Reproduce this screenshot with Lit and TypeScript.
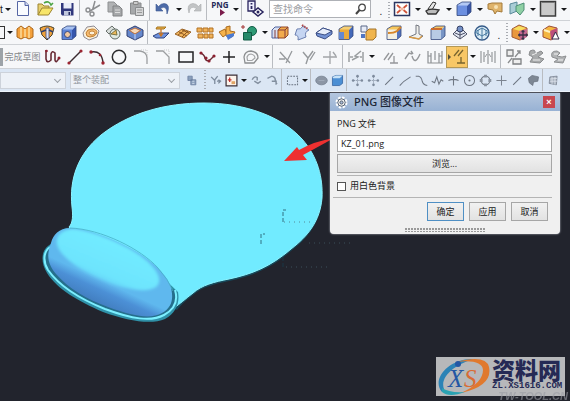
import { LitElement, html, svg, css, nothing, type SVGTemplateResult } from "lit";
import { customElement, property } from "lit/decorators.js";

type Glyph = SVGTemplateResult;

// A shaded isometric cube shared by the solid-modelling icons.
const cube = (top: string, left: string, right: string): Glyph => svg`
  <path d="M2 5L7 2H16L12 6H2z" fill=${top} />
  <path d="M2 5.500H12V15.500H2z" fill=${left} />
  <path d="M12 6L16 2V12L12 15.500z" fill=${right} />
  <path d="M2 5L7 2H16V12L12 15.500H2z" fill="none" stroke="#33477c" stroke-width=".8" />`;

const trim = svg`<path d="M3 4L13 15M9 15L15 3M2 11H8" stroke="#96999c" fill="none" stroke-width="1.3" />`;

const glyphs: Record<string, Glyph> = {
  file: svg`<path d="M3.500 1.500H11L14.500 5V15.500H3.500z" fill="#fafcff" stroke="#5666a4" /><path d="M11 1.500V5.500H14.500" fill="#cfd9f2" stroke="#5666a4" />`,
  open: svg`<path d="M2 15V4H6L8 6H13V8" fill="#e8d070" stroke="#9c8430" /><path d="M2 15L6 8H17L12.500 15z" fill="#f7e56a" stroke="#9c8430" /><path d="M8 3Q13 0 15 5L17 3" fill="none" stroke="#4da545" stroke-width="1.600" />`,
  save: svg`<path d="M3 3H15.500V15.500H4L3 14z" fill="#30377c" /><path d="M5.500 3H13.500V8.500H5.500z" fill="#e9edf8" /><path d="M6 11H13V15.500H6z" fill="#bfc6dc" /><path d="M10.500 12H12V15H10.500z" fill="#242b5e" />`,
  cut: svg`<path d="M11 1L8.500 10M16 5L6 11" stroke="#8c8e90" stroke-width="1.500" /><circle cx="4" cy="10" r="2" fill="none" stroke="#8c8e90" stroke-width="1.400" /><circle cx="8" cy="14" r="2" fill="none" stroke="#8c8e90" stroke-width="1.400" />`,
  copy: svg`<path d="M2 2H8L11 5V12H2z" fill="#b0b2b4" stroke="#8e9092" /><path d="M7 6H13L16 9V16H7z" fill="#a6a8aa" stroke="#808284" /><path d="M9 10H14M9 12.500H14" stroke="#ddd" />`,
  paste: svg`<path d="M2.500 3H13V14H2.500z" fill="#a6a8aa" stroke="#8a8c8e" /><path d="M5.500 1.500H10V4.500H5.500z" fill="#ccc" stroke="#888" /><path d="M7.500 7.500H15.500V15.500H7.500z" fill="#d4d5d6" stroke="#8a8c8e" /><path d="M9 10H14M9 12.500H14" stroke="#999" />`,
  undo: svg`<path d="M2 4V11H9L6.500 8.500Q13 4.500 13 14Q17 4 10 3.500Q7 3.500 4.500 6.500z" fill="#4d6ba8" stroke="#3c5790" stroke-width=".6" />`,
  redo: svg`<path d="M16 4V11H9L11.500 8.500Q5 4.500 4 13Q1 4 8 3.500Q11 3.500 13.500 6.500z" fill="#c2c4c6" stroke="#a9abad" stroke-width=".6" />`,
  play: svg`<path d="M7 9L12 12.500L7 16z" fill="#7b1c4c" />`,
  info: svg`<path d="M2 1H9V11H2z" fill="#eef" stroke="#29245e" stroke-width="1.300" /><path d="M5.500 3V4.500M5.500 6V9" stroke="#29245e" stroke-width="1.800" /><path d="M7 12L12 8L17 12L12 16z" fill="#fff" stroke="#29245e" stroke-width="1.500" /><circle cx="12" cy="12" r="1.500" fill="#29245e" />`,
  fit: svg`<path d="M1.500 2.500H16.500V15.500H1.500z" fill="#fff" stroke="#2a3560" stroke-width="1.500" /><path d="M4 5L7.500 8M14 5L10.500 8M4 13L7.500 10M14 13L10.500 10" stroke="#d0543a" stroke-width="1.800" /><path d="M7.500 7.500H10.500V10.500H7.500z" fill="#f1b49c" />`,
  clip: svg`<path d="M4 9L9 2L12 3L8 10z" fill="#e6e6e6" stroke="#333" /><path d="M2 11Q5 8 15 10L12 14L4 14z" fill="#bcbcbc" stroke="#333" stroke-width="1.300" />`,
  cube: cube("#b3c9f5", "#6c8fe0", "#3755a8"),
  view: svg`<path d="M2 4L6 3H16V12L11 11L9 14L7 10L2 9z" fill="#dfb36a" stroke="#a47a3a" /><circle cx="10" cy="7" r="2" fill="#f6e2b4" />`,
  shade: svg`<path d="M2 4L9 2V11L2 14z" fill="#a9cdd6" stroke="#5a8a9a" /><path d="M8 6L16 3V10L12 15L8 11z" fill="#8fd0a4" stroke="#4e8f77" />`,
  swatch: svg`<path d="M1.500 1.500H16.500V16H1.500z" fill="#c9c9c9" stroke="#3c3c3c" stroke-width="1.500" /><path d="M3 2.500H15.500" stroke="#777" />`,
  sheet: svg`<path d="M1 5L5 2L9 5L13 2L17 5V13L13 15L9 13L5 15L1 13z" fill="#f3a13c" stroke="#ac671b" /><path d="M5 3V14M9 5V13M13 3V14" stroke="#fbdc9c" stroke-width="1.500" />`,
  revolve: svg`<path d="M2 4Q9 0 16 4L14 11L9 16L4 11z" fill="#efa23c" stroke="#4a4430" /><path d="M8 4H11V15L8 14z" fill="#dfe5f7" stroke="#3c4a7c" stroke-width=".8" /><path d="M3 8L8 6M11 6L15 8" stroke="#33406c" stroke-width="1.500" />`,
  hole: svg`${cube("#a9c3f2", "#5d84d8", "#3656ac")}<circle cx="7.500" cy="10.500" r="3" fill="#f0c8a0" stroke="#37477c" />`,
  unite: svg`<path d="M1 9L5 3L12 2L17 7L15 13L7 16L2 13z" fill="#fbf1dd" stroke="#8d8a94" /><path d="M4 9Q5 5 10 5Q15 5 15 9Q13 13 8 13Q4 13 4 9z" fill="#f6bc72" stroke="#c27f31" /><ellipse cx="10" cy="9" rx="3" ry="2" fill="#fdf0da" stroke="#c27f31" />`,
  gear3: svg`<path d="M2 7L8 2L11 5L5 10z" fill="#d9dfdc" stroke="#69706c" /><ellipse cx="11" cy="10" rx="5" ry="5" fill="#dfe9e2" stroke="#5f6a64" /><path d="M7 10L12 6L13 11z" fill="#ebb85b" stroke="#7c7440" />`,
  shell: svg`<path d="M1 6L9 2L17 6V12L9 16L1 12z" fill="#6688cc" stroke="#303e70" /><path d="M3.500 6.500L9 4L14.500 6.500L9 10z" fill="#f8d9b8" stroke="#be6f3a" /><path d="M9 10V15.500" stroke="#c4d5fa" />`,
  offset: svg`<path d="M1 12L7 9H17L12 14H4z" fill="#6f92dd" stroke="#30457e" /><path d="M5 3H14L12 5H4z" fill="#f3b64c" stroke="#a3731e" /><path d="M9 5V11M7 9L9 12L11 9" fill="none" stroke="#cb7723" stroke-width="1.300" />`,
  pattern: svg`<path d="M1 10L8 5L17 8L10 14z" fill="#f1b45c" stroke="#9b6427" /><path d="M5 8L13 12M8 6L15 9M4 11L11 6M8 13L14 7" stroke="#8f5a22" />`,
  waves: svg`<path d="M1 4H6V8H1zM7 4H12V8H7zM13 4H17V8H13zM2 10H7V14H2zM8 10H12V14H8zM13 10H17V14H13z" fill="#f1b35a" stroke="#b37224" />`,
  move: svg`<path d="M1 8L7 5L9 10L5 13z" fill="#f5b24b" stroke="#a86a1f" /><path d="M8 3L12 2V7L17 8L14 13L8 12z" fill="#f5b24b" stroke="#a86a1f" /><path d="M8 11L16 9V12L10 16z" fill="#4d7bd0" />`,
  sketch: svg`<path d="M1 3H5M3 1V5" stroke="#a03030" /><circle cx="12" cy="7" r="4.500" fill="#2e9a75" stroke="#125c46" /><path d="M3.500 8.500H11.500V16H3.500z" fill="#26896a" stroke="#125c46" />`,
  split: svg`<path d="M1 6L4 3H10V11L8 14H1z" fill="#d8e0f2" stroke="#50629c" /><path d="M7 6L10 3H17V11L14 14H7z" fill="#f2ab4d" stroke="#924724" /><path d="M7 6H14V14M14 6L17 3M4 6V14" fill="none" stroke="#843c3c" />`,
  drape: svg`<path d="M4 5Q8 6 10 2L16 6Q11 8 13 13L5 16Q6 11 2 11z" fill="#c5d5f2" stroke="#6b7fb0" /><path d="M9 1L15 5" stroke="#b14a4a" stroke-width="2" stroke-dasharray="1.500 1" />`,
  prism: svg`<path d="M1 9L8 4L17 7V10L10 15L2 12z" fill="#7392d4" stroke="#3c4f86" /><path d="M1 9L8 4L17 7L10 11z" fill="#e6edfa" stroke="#3c4f86" />`,
  half: svg`${cube("#f6cf74", "#e9ab3c", "#4469ba")}<path d="M2 8H7V15H2z" fill="#6288d2" />`,
  boxes: svg`<path d="M2 2H8V8H2z" fill="#e7ecf7" stroke="#596688" /><path d="M7 8L10 5H17V13L14 16H7z" fill="#f0b54e" stroke="#a3742b" /><path d="M2 10H6V14H2z" fill="#5076c2" />`,
  blend: svg`${cube("#f6c75c", "#f4f0e2", "#5474bf")}<path d="M3 9Q9 9 12 7L16 3" fill="none" stroke="#d8862b" stroke-width="2" />`,
  draft: svg`<path d="M9 1L12 2V10L16 12L12 15L2 13L9 10z" fill="#f1f1ed" stroke="#737780" /><path d="M2 13L12 15L15 12" fill="none" stroke="#d89a45" stroke-width="1.400" />`,
  block: svg`${cube("#f9c867", "#b8cbe4", "#7895c5")}<path d="M2 5H13" stroke="#cc6d2c" stroke-width="2" />`,
  cone: svg`<path d="M2 10L9 3L16 10L9 15z" fill="#e3e8f3" stroke="#4a4f65" /><circle cx="9" cy="5" r="3" fill="#7591c7" stroke="#374266" /><path d="M9 8V15M4 9L9 11L14 9" fill="none" stroke="#4a4f65" />`,
  mesh: svg`<circle cx="9" cy="9" r="7" fill="#dcecf5" stroke="#355a88" stroke-width="1.300" /><path d="M2 8L9 4L16 8L9 12zM9 4V15M5 6L5 12M13 6V12" fill="none" stroke="#4478a0" />`,
  dims: svg`<path d="M1 5L8 1L16 4V12L9 16L1 13z" fill="#e9973c" stroke="#a05a37" /><path d="M2 5L8 2L15 4L9 7z" fill="#f7df60" /><path d="M8 7L16 5V13L9 16z" fill="#c76993" /><path d="M7 11H17M12 6V16M8.500 9.500V12.500M15.500 9.500V12.500M10.500 7.500H13.500M10.500 14.500H13.500" stroke="#3b3147" stroke-width="1.300" />`,
  warn: svg`<path d="M1 6L7 2L15 4V12L9 16L1 13z" fill="#f4b640" stroke="#9c4c36" /><path d="M8 7L15 4V12L9 16z" fill="#bd4e7b" /><path d="M10 15L13.500 8L17 15z" fill="#fff" stroke="#342b48" /><path d="M2 6L8 8" stroke="#fff3bf" stroke-width="2" />`,
  profile: svg`<path d="M2 2V11Q3 16 7 12V6Q8 2 11 5V12Q12 16 15 10" fill="none" stroke="#682b35" stroke-width="1.600" /><circle cx="2.500" cy="3" r="1.300" fill="#8c2130" /><circle cx="15" cy="10" r="1.500" fill="#8c2130" />`,
  line: svg`<path d="M3 15L15 3" stroke="#3a2a30" stroke-width="1.400" /><circle cx="3" cy="15" r="1.600" fill="#9c2532" /><circle cx="15" cy="3" r="1.600" fill="#9c2532" />`,
  arc: svg`<path d="M3 4Q14 2 15 15" fill="none" stroke="#3a2a30" stroke-width="1.400" /><circle cx="3" cy="4" r="1.700" fill="#9c2532" /><circle cx="15" cy="15" r="1.700" fill="#9c2532" /><circle cx="12" cy="7" r="1.300" fill="#9c2532" />`,
  circle: svg`<circle cx="9" cy="9" r="6.700" fill="none" stroke="#2c2c2e" stroke-width="1.500" />`,
  fillet: svg`<path d="M2 3H8Q15 4 15 10V16" fill="none" stroke="#9c9ea0" stroke-width="1.300" /><path d="M9 2H15V8" fill="none" stroke="#c6c7c9" stroke-dasharray="1 1" />`,
  chamfer: svg`<path d="M2 3H9L15 9V16" fill="none" stroke="#9c9ea0" stroke-width="1.300" /><path d="M10 2H15V7" fill="none" stroke="#c6c7c9" stroke-dasharray="1 1" />`,
  rect: svg`<path d="M3 4H17V14H3z" fill="none" stroke="#232325" stroke-width="1.500" />`,
  spline: svg`<path d="M2 5Q6 6 7 10T12 12L16 8" fill="none" stroke="#682b35" stroke-width="1.400" /><circle cx="3" cy="5" r="1.600" fill="#8c2130" /><circle cx="8" cy="10" r="1.600" fill="#8c2130" /><circle cx="11" cy="13" r="1.600" fill="#8c2130" /><circle cx="16" cy="8" r="1.600" fill="#8c2130" />`,
  plus: svg`<path d="M9 3V15M3 9H15" stroke="#232325" stroke-width="1.500" />`,
  offsetCurve: svg`<path d="M3 15L2 9Q3 3 9 3Q16 4 16 10L12 15z" fill="none" stroke="#8c8e90" stroke-width="1.300" /><path d="M5.500 12.500L5 9Q6 6 9 6Q13 7 13 10L10 12.500z" fill="none" stroke="#a2a4a6" stroke-width="1.200" />`,
  trim,
  extend: svg`<path d="M4 4L9 10L14 3M9 10L7 16M11 12L16 4" stroke="#96999c" fill="none" stroke-width="1.400" />`,
  corner: svg`<path d="M2 9H16M9 3V16M12 4L15 8" stroke="#a2a5a8" fill="none" stroke-width="1.300" />`,
  measure: svg`<path d="M2 4V14M16 4V14M3 9H6M13 9H15M5 12L11 9L8 8L14 3" fill="none" stroke="#9a9ea0" stroke-width="1.500" />`,
  parallel: svg`<path d="M2 12L7 5M6 12L11 5M8 15H16M12 8V15" stroke="#95979a" fill="none" stroke-width="1.300" />`,
  wave: svg`<path d="M1 11L5 5L8 6M7 3L9 6M8 8Q11 18 16 6" fill="none" stroke="#95979a" stroke-width="1.400" />`,
  columns: svg`<path d="M2 3V15H16V3M9 3V12M5 5V15M13 5V15M2 8H5M13 8H16" fill="none" stroke="#8e9194" stroke-width="1.200" />`,
  relation: svg`<path d="M0 6V12L3 9z" fill="#54503c" /><path d="M6 8L11 2M10 8L15 2M9 15H17M13 9V15" stroke="#77642f" fill="none" stroke-width="1.300" />`,
  mirror: svg`<path d="M2 3V15M5 4V14M13 4V14M16 3V15M9 2V16" stroke="#96999c" stroke-width="1.200" /><path d="M6 9L8 6M12 9L10 6" stroke="#96999c" />`,
  project: svg`<path d="M2 2H8V8H2zM8 11H16V16H8z" fill="#eee" stroke="#7e8082" stroke-width="1.300" /><path d="M3 15L7 10M10 9L15 3M12 3H15V6" fill="none" stroke="#8b8d8f" stroke-width="1.300" />`,
  convert: svg`<path d="M3 3Q9 0 8 6L14 3L16 5L11 9L17 11L13 15L3 14L6 9L2 7z" fill="#a9abac" stroke="#8a8c8e" /><path d="M5 7L10 5M6 12H13" stroke="#eee" />`,
  loop: svg`<path d="M3 9Q1 3 8 3L11 5L8 8L13 9L17 8L14 15L5 14L9 11z" fill="#b2b4b6" stroke="#8d8f91" /><path d="M5 6H9M9 12H14" stroke="#f2f2f2" />`,
  filter: svg`<path d="M4 3H10V9H4zM8 8H15V15H8z" fill="#8ba0bc" stroke="#64789a" /><path d="M10 10H13M10 13H13" stroke="#e3ecf8" />`,
  funnel: svg`<path d="M3 4L8 9M12 3L8 8V14M11 10H16M13 8L16 10L13 13" stroke="#7e8b9c" fill="none" stroke-width="1.800" />`,
  framed: svg`<path d="M1.500 1.500H16.500V16.500H1.500z" fill="#fdf4ec" stroke="#3c3038" stroke-width="1.700" /><path d="M4 8H9M6.500 5V11" stroke="#bf3030" stroke-width="1.800" /><path d="M9 10H14V14H9z" fill="#e0a464" />`,
  hookA: svg`<path d="M3 8Q6 2 10 5V9M6 10L11 13L15 10" fill="none" stroke="#838f9f" stroke-width="2" />`,
  hookB: svg`<path d="M2 6L8 3Q13 4 13 9L15 14M8 10H14V15" fill="none" stroke="#838f9f" stroke-width="2" />`,
  marquee: svg`<path d="M2 3H16V15H2z" fill="none" stroke="#67717f" stroke-width="1.400" stroke-dasharray="2.500 1.500" />`,
  blob: svg`<ellipse cx="9" cy="9" rx="8" ry="6" fill="#8c96a5" stroke="#6f7a8a" /><path d="M5 9H13" stroke="#a8b2c0" />`,
  solid: svg`<path d="M2 4L7 2H16V13L12 16H2z" fill="#4c8fd4" stroke="#2c5d9c" /><path d="M2 4L7 2H16L12 6H3z" fill="#c6e2f8" />`,
  nodes: svg`<path d="M4 9H14M9 4V14" stroke="#7d8a9c" stroke-dasharray="2 1" /><circle cx="3" cy="9" r="1.800" fill="#7d8a9c" /><circle cx="15" cy="9" r="1.800" fill="#7d8a9c" /><circle cx="9" cy="3" r="1.800" fill="#7d8a9c" /><circle cx="9" cy="15" r="1.800" fill="#7d8a9c" />`,
  slash: svg`<path d="M4 14L14 4M3 15L5 13" stroke="#707884" stroke-width="1.500" />`,
  stroke: svg`<path d="M1 16Q6 10 16 4" fill="none" stroke="#707884" stroke-width="1.500" />`,
  scurve: svg`<path d="M1 3H5Q9 4 10 10Q11 15 17 16" fill="none" stroke="#707884" stroke-width="1.500" />`,
  zig: svg`<path d="M1 10L5 12L8 4L11 14L14 8L17 10" fill="none" stroke="#6f7783" stroke-width="1.500" />`,
  cross: svg`<path d="M9 3V16M2 9Q9 6 16 9" fill="none" stroke="#6f7783" stroke-width="1.500" />`,
  target: svg`<circle cx="9" cy="9" r="7" fill="none" stroke="#6f7783" stroke-width="1.400" /><circle cx="9" cy="9" r="1.500" fill="#6f7783" />`,
  quad: svg`<circle cx="9" cy="9" r="6" fill="none" stroke="#6f7783" stroke-width="1.400" /><path d="M7 1H11V5H7zM7 13H11V17H7zM1 7H5V11H1zM13 7H17V11H13z" fill="#89929f" />`,
  thin: svg`<path d="M9 2V16M2 9H16" stroke="#7c8490" stroke-width="1.400" />`,
  face: svg`<path d="M2 6L7 2L16 4L15 10L9 11L8 16L3 12z" fill="#7d8794" stroke="#68717e" />`,
  grid: svg`<path d="M4 4L14 3L13 15L3 13z" fill="#a6afbc" stroke="#727b88" /><path d="M4 7L14 6M4 10L14 10M7 4V14M11 4V15" stroke="#e2e7ef" />`,
};

@customElement("tool-icon")
class ToolIcon extends LitElement {
  @property() name = "";

  static styles = css`
    :host { display: flex; flex: none; width: 22px; }
    :host([compact]) { width: 16px; }
    .btn { flex: 1; display: flex; align-items: center; justify-content: center; min-width: 0; height: 22px; margin: 0; padding: 0; border: 0; background: none; }
    .art { width: 18px; height: 18px; flex: none; overflow: visible; }
    :host([compact]) .art { width: 13px; height: 13px; }
    :host([active]) .btn { background: #f8c766; outline: 1px solid #b39857; outline-offset: -1px; }
  `;

  render() {
    return html`<button class="btn" type="button" aria-label=${this.name}>
      <svg class="art" viewBox="0 0 18 18" aria-hidden="true">${glyphs[this.name] ?? nothing}</svg>
    </button>`;
  }
}

// "|" separator, ":" drag handle, "v" drop-down arrow, "_" narrow gap, "*" marks the active tool.
const rowFile = "file open save | cut copy paste | undo v redo |";
const rowView = ": fit v clip v cube v view shade v swatch v";
const rowFeature =
  "v sheet revolve hole unite gear3 shell | offset pattern waves move sketch v split drape prism half boxes _ blend draft block cone mesh";
const rowFeatureEnd = ": dims v warn v";
const rowSketch =
  "profile line arc circle fillet chamfer rect spline plus offsetCurve v | trim extend corner | measure v _ parallel wave columns *relation v mirror | project convert loop";
const rowSelect =
  "filter _ : funnel framed v hookA hookB | marquee v | blob solid | nodes nodes slash stroke scurve zig cross target quad thin slash face | grid";

@customElement("app-root")
class AppRoot extends LitElement {
  static styles = css`
    :host { display: flex; flex-direction: column; min-height: 100vh; background: #22242d; font-family: "Liberation Sans", "Noto Sans CJK SC", sans-serif; font-size: 10px; color: #222; overflow: hidden; }
    .bar { display: flex; align-items: center; height: 24px; box-sizing: border-box; overflow: hidden; background: #f6f7f9; border-bottom: 1px solid #cfd2d6; }
    .bar.first { height: 21px; padding-bottom: 2px; }
    .bar.select { background: #dbe6f4; height: 23px; border-bottom-color: #eef4fb; }
    .sep, .handle, .caret, .gap { flex: none; }
    .sep { width: 4px; height: 24px; background: linear-gradient(90deg, transparent 1px, #b9bcc1 1px 2px, transparent 2px); }
    .handle { width: 4px; height: 20px; background: repeating-linear-gradient(#a9acb2 0 1px, transparent 1px 3px) 1px 0 / 2px 100% no-repeat; }
    .gap { width: 4px; }
    .caret { width: 9px; padding: 0; border: 0; background: none; display: flex; justify-content: center; }
    .caret::before { content: ""; border: 3px solid transparent; border-top-color: #17181a; border-bottom-width: 0; }
    .stub { width: 3px; flex: none; }
    .frag { width: 5px; height: 13px; flex: none; box-sizing: border-box; border: 1px solid #333; border-left: 0; }
    .dot { width: 12px; flex: none; text-align: center; line-height: 12px; padding-top: 6px; box-sizing: border-box; }
    .png { flex: none; width: 22px; height: 18px; padding: 0; border: 0; background: none; position: relative; display: flex; justify-content: center; align-items: flex-start; font: bold 8px/9px "Open Sans", sans-serif; color: #262b58; }
    .png svg { position: absolute; left: 4px; top: 0; width: 18px; height: 18px; }
    .search { display: flex; align-items: center; flex: none; width: 102px; height: 18px; box-sizing: border-box; margin: 0 4px 0 3px; padding: 0 3px; border: 1px solid #aeb1b6; background: #fff; }
    .search input { flex: 1; min-width: 0; border: 0; padding: 0; outline: 0; background: none; font: inherit; }
    .search input::placeholder { color: #9b9da2; }
    .search svg { width: 12px; height: 12px; }
    .finish { width: 39px; flex: none; padding: 0; border: 0; background: none; font: inherit; font-size: 9px; white-space: nowrap; color: #85878a; }
    .block { width: 3px; height: 18px; background: #9da3a8; flex: none; }
    .pick { position: relative; flex: none; width: 110px; margin-right: 3px; display: flex; }
    .pick.short { width: 66px; margin-right: 4px; }
    .pick select { appearance: none; width: 100%; height: 17px; padding: 0 16px 0 2px; border: 1px solid #cdd2da; border-radius: 0; background: #edf1f7; font: inherit; font-size: 9px; line-height: 15px; color: #92969c; opacity: 1; }
    .pick::after { content: ""; position: absolute; right: 6px; top: 5px; width: 4px; height: 4px; border: solid #9a9fa6; border-width: 0 1px 1px 0; transform: rotate(45deg); }
    .stage { position: relative; flex: 1; }
    .scene { display: block; width: 100%; }
    .dialog { position: absolute; top: 1px; right: 10px; width: 230px; box-sizing: border-box; background: #f0f0f0; border-radius: 0 0 4px 4px; box-shadow: 0 0 2px #c8ccd4; }
    .title { display: flex; align-items: center; height: 18px; padding: 0 5px; background: linear-gradient(#b4c6de, #98b2d4); }
    .title svg { width: 13px; height: 13px; }
    .title h1 { flex: 1; margin: 0 0 0 6px; font: 500 11px/18px "Noto Sans", "Noto Sans CJK SC", sans-serif; color: #1c2636; }
    .close { width: 12px; height: 12px; padding: 0; border: 0; background: #c8474f; color: #fff; font: bold 9px/12px "Liberation Sans", sans-serif; }
    .form { display: flex; flex-direction: column; padding: 6px 8px 2px 7px; font: 9px/14px "Open Sans", "Noto Sans CJK SC", sans-serif; color: #1a1a1a; }
    .name { height: 17px; margin: 4px 0 2px; padding: 0 3px; box-sizing: border-box; border: 1px solid #a7a7a7; background: #fff; font: inherit; color: inherit; }
    .push { height: 19px; box-sizing: border-box; padding: 0; border: 1px solid #a6a6a6; background: linear-gradient(#f1f1f1, #e2e2e2); font: inherit; line-height: 16px; color: inherit; }
    .check { display: flex; align-items: center; gap: 4px; height: 18px; margin-top: 2px; padding-top: 1px; border-top: 1px solid #b4b4b4; }
    .check input { appearance: none; width: 9px; height: 9px; box-sizing: border-box; margin: 0; border: 1px solid #555; background: #fff; }
    .actions { display: flex; justify-content: flex-end; gap: 5px; margin: 2px 0 0 -4px; padding: 4px 4px 0 0; border-top: 1px solid #b4b4b4; }
    .actions .push { width: 37px; }
    .actions .main { border-color: #4f8fc4; }
    .grip { width: 80px; height: 4px; margin: 7px auto 0; background: radial-gradient(circle at 1px 1px, #999 1px, transparent 1px) 0 0 / 3px 3px; }
    .mark { position: absolute; right: 5px; bottom: 5px; display: flex; width: 129px; height: 39px; background: #b7b8ba; color: #252a55; }
    .mark svg { width: 56px; height: 39px; flex: none; }
    .brand { display: flex; flex-direction: column; font: 900 23px/25px "Noto Sans CJK SC", sans-serif; white-space: nowrap; }
    .site { font: bold 9px/9px "Liberation Mono", monospace; }
    .under { position: absolute; right: 2px; bottom: 0; font: bold italic 11px/10px "Liberation Sans", sans-serif; color: #9a9ca4; opacity: .6; }
  `;

  private tools(spec: string, compact = false) {
    return spec.split(" ").map((t) => {
      if (t === "|") return html`<span class="sep"></span>`;
      if (t === ":") return html`<span class="handle"></span>`;
      if (t === "_") return html`<span class="gap"></span>`;
      if (t === "v") return html`<button class="caret" type="button" aria-label="more"></button>`;
      const active = t.startsWith("*");
      return html`<tool-icon name=${active ? t.slice(1) : t} ?compact=${compact} ?active=${active}></tool-icon>`;
    });
  }

  private scene() {
    return svg`
      <defs>
        <linearGradient id="side" gradientUnits="userSpaceOnUse" x1="105" y1="282" x2="94" y2="306">
          <stop offset="0" stop-color="#5fb8ee" /><stop offset=".35" stop-color="#4c90d6" /><stop offset="1" stop-color="#3f79ba" />
        </linearGradient>
        <linearGradient id="top" gradientUnits="userSpaceOnUse" x1="120" y1="245" x2="104" y2="283">
          <stop offset="0" stop-color="#71ebff" /><stop offset=".8" stop-color="#6de4fd" /><stop offset="1" stop-color="#66d2f7" />
        </linearGradient>
        <filter id="soft" x="-10%" y="-10%" width="120%" height="120%"><feGaussianBlur stdDeviation="1.500" /></filter>
      </defs>
      <path d="M69 227C73 223 73 215 72 207C69 179 78 154 101 135C129 113 165 103 204 103C246 103 282 117 302 139C318 157 323 178 322 198C320 221 308 236 291 249C270 267 252 274 229 279C214 282 202 285 193 293C184 300 181 303 177 308L112 275z" fill="#17495b" transform="translate(0 2)" />
      <path d="M69 227C73 223 73 215 72 207C69 179 78 154 101 135C129 113 165 103 204 103C246 103 282 117 302 139C318 157 323 178 322 198C320 221 308 236 291 249C270 267 252 274 229 279C214 282 202 285 193 293C184 300 181 303 174 308L112 275z" fill="#71ebff" stroke="#8cf4ff" />
      <path d="M51 244C41 249 40 262 47 273C57 289 78 301 103 312C128 321 151 325 165 319C176 313 180 303 178 292L150 265L70 240z" fill="#2f91a8" />
      <path d="M50 247C43 252 43 262 48 270C60 287 80 299 105 309C132 319 151 322 164 315C175 309 178 300 175 290" fill="#256f8c" stroke="#7cefff" stroke-width="2" />
      <path d="M70 228C59 228 53 235 51 243C46 256 48 264 56 274C68 288 86 299 108 307C135 317 151 319 162 313C173 307 174 297 170 284C163 270 147 257 130 248C108 236 86 229 70 228z" fill="url(#side)" />
      <path d="M71 229C57 231 53 241 60 251C70 265 90 275 112 284C133 291 149 292 156 287C165 279 154 263 130 249C108 237 85 229 71 229z" fill="url(#top)" filter="url(#soft)" />
      <path d="M70 228C101 229 141 249 158 268Q168 279 173 291" fill="none" stroke="#48aec8" stroke-width=".8" />
      <path d="M284 161L297 147L299 150Q315 141 334 138Q318 147 303 155L307 160z" fill="#ee3030" />
      <g fill="none" stroke="#173f50" opacity=".7">
        <path d="M283 222V210H286M261 244V234H265M283 267V257" stroke-dasharray="4 2" />
        <path d="M284 222H311M309 243H350M286 267H328" stroke-dasharray="1 4" stroke="#47606c" />
      </g>`;
  }

  render() {
    return html`
      <nav class="bar first" aria-label="标准">
        <span class="stub">t</span>${this.tools("v")}${this.tools(rowFile)}
        <button class="png" type="button">PNG<svg viewBox="0 0 18 18">${glyphs.play}</svg></button>
        ${this.tools("v | info")}
        <label class="search">
          <input type="search" placeholder="查找命令" aria-label="查找命令" />
          <svg viewBox="0 0 12 12"><circle cx="7" cy="4.500" r="3.300" fill="#fff" stroke="#444" stroke-width="1.300" /><path d="M4.500 7L1 11" stroke="#444" stroke-width="2" /></svg>
        </label>
        <span class="dot">.</span>${this.tools(rowView)}
      </nav>
      <nav class="bar" aria-label="特征">
        <span class="frag"></span>${this.tools(rowFeature)}<span class="dot">.</span>${this.tools(rowFeatureEnd)}
      </nav>
      <nav class="bar" aria-label="草图">
        <span class="block"></span><button class="finish" type="button">完成草图</button>${this.tools(rowSketch)}
      </nav>
      <nav class="bar select" aria-label="选择">
        <span class="pick short"><select aria-label="过滤器"><option></option></select></span>
        <span class="pick"><select aria-label="范围"><option>整个装配</option></select></span>
        ${this.tools(rowSelect, true)}
      </nav>
      <main class="stage">
        <svg class="scene" viewBox="0 92 570 309" role="img" aria-label="鼠标垫">${this.scene()}</svg>
        <section class="dialog" role="dialog" aria-labelledby="heading">
          <header class="title">
            <svg viewBox="0 0 14 14"><circle cx="7" cy="7" r="5" fill="none" stroke="#fff" stroke-width="3" stroke-dasharray="2.600 1.300" /><circle cx="7" cy="7" r="4" fill="#f6f6f6" stroke="#4c5664" /><circle cx="7" cy="7" r="1.700" fill="#a9bcd8" stroke="#4c5664" /></svg>
            <h1 id="heading">PNG 图像文件</h1>
            <button class="close" type="button" aria-label="关闭">×</button>
          </header>
          <div class="form">
            <label for="name">PNG 文件</label>
            <input class="name" id="name" type="text" value="KZ_01.png" />
            <button class="push" type="button">浏览...</button>
            <label class="check"><input type="checkbox" />用白色背景</label>
            <div class="actions">
              <button class="push main" type="button">确定</button>
              <button class="push" type="button">应用</button>
              <button class="push" type="button">取消</button>
            </div>
            <div class="grip"></div>
          </div>
        </section>
        <aside class="mark">
          <svg viewBox="0 0 56 39">
            <path d="M6 35C-5 23 12 1 38 2C22 6 3 19 8 32z" fill="#2c83b6" />
            <path d="M20 5Q50 -3 53 10Q57 29 25 36Q47 26 47 13Q46 2 20 5z" fill="#e0792e" />
            <path d="M6 31Q13 36 29 35Q13 41 6 35z" fill="#2aa2b2" />
            <circle cx="22" cy="7" r="3" fill="#2457a4" />
            <text x="12" y="30" font-family="Liberation Serif" font-style="italic" font-size="25" fill="#2457a4">X</text>
            <text x="28" y="30" font-family="Liberation Serif" font-style="italic" font-size="25" fill="#d96b34">S</text>
          </svg>
          <div class="brand">资料网<span class="site">ZL.XS1616.COM</span></div>
        </aside>
        <span class="under">TW-TOOL.CN</span>
      </main>`;
  }
}
